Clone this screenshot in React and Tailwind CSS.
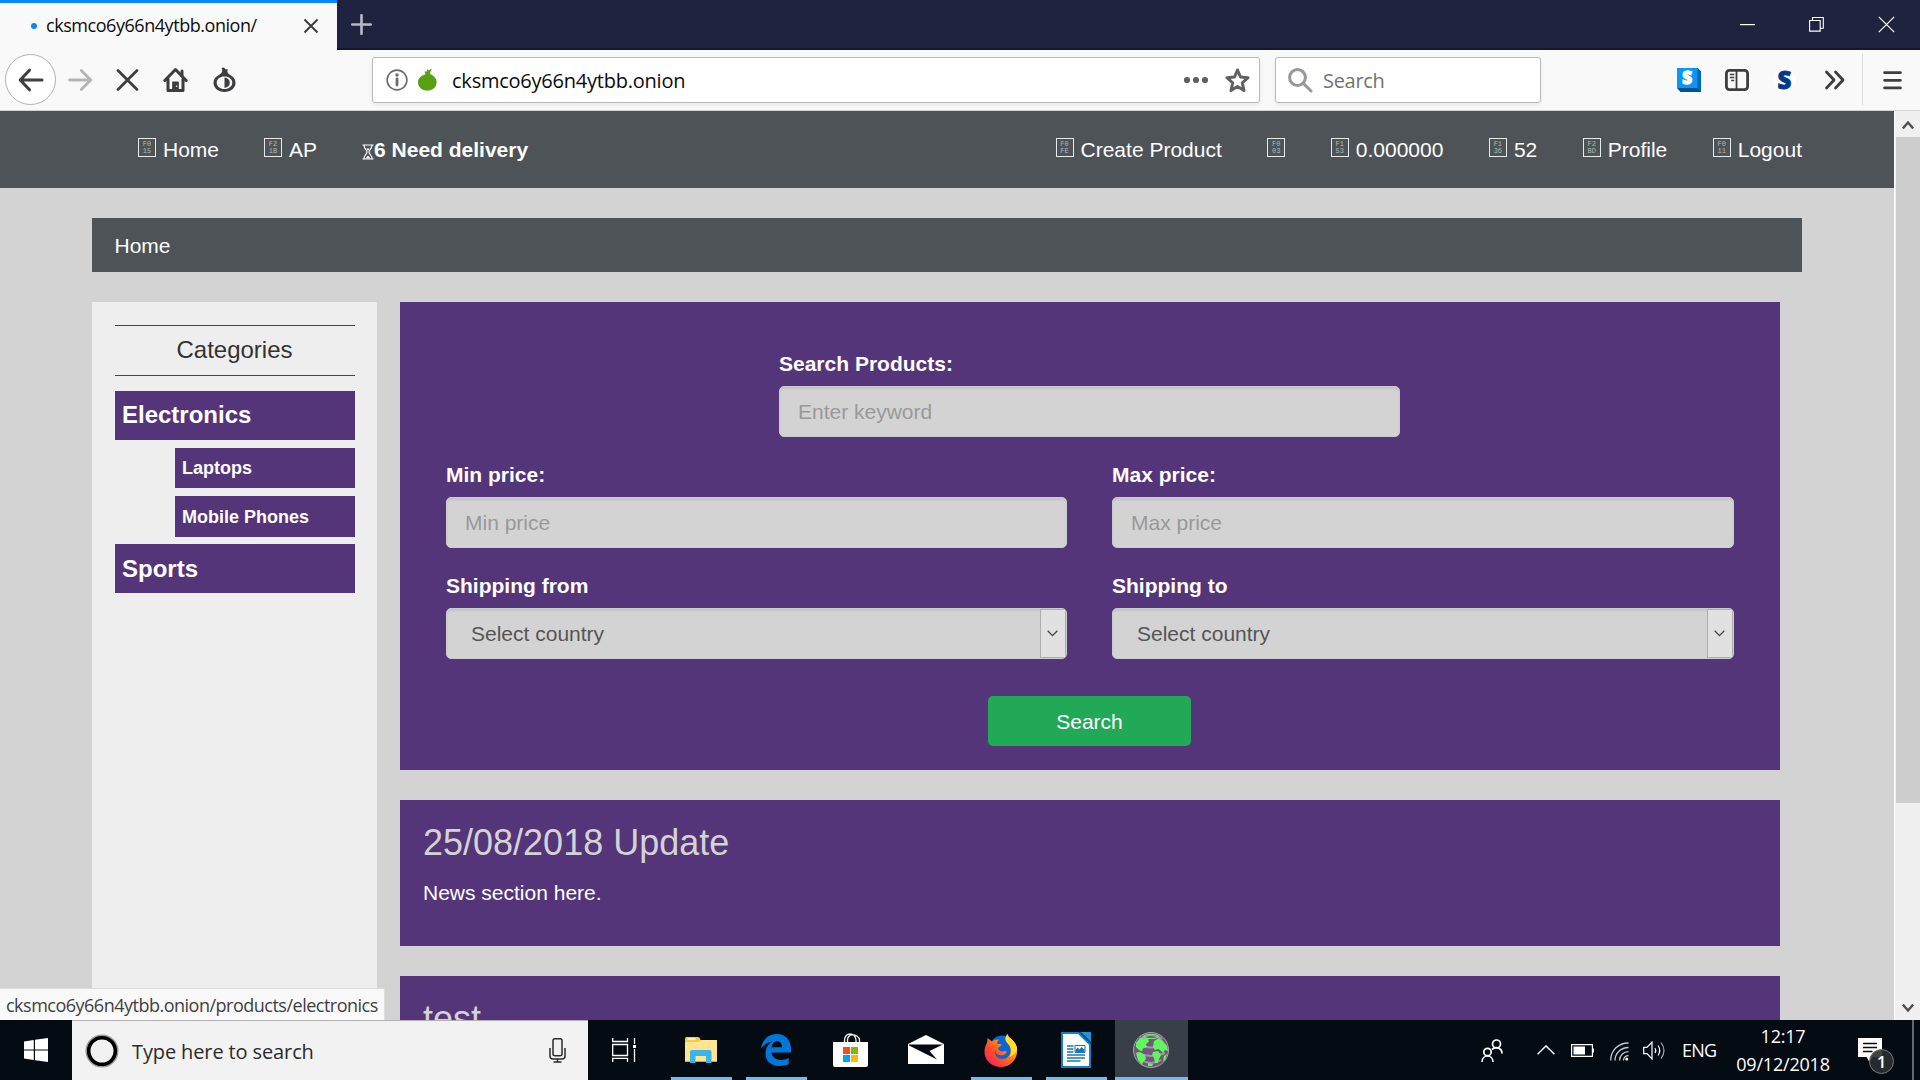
import React from "react";

// Box drawn by the browser when the icon font has no glyph
const MissingGlyph = ({ code }) => (
  <span className="mt-[3px] flex h-[19px] w-[18px] flex-none flex-col items-center justify-center border border-[#e8e9e9] font-['Liberation_Mono'] text-[7px] leading-[7px] text-[#b4b8ba]">
    <span>{code.slice(0, 2)}</span>
    <span>{code.slice(2)}</span>
  </span>
);

const NavItem = ({ code, label }) => (
  <a className="flex h-[30px] gap-[7px] whitespace-nowrap text-[21px] leading-[30px] text-white">
    <MissingGlyph code={code} />
    {label && <span>{label}</span>}
  </a>
);

const Field = ({ label, placeholder, className = "" }) => (
  <div className={className}>
    <label className="mb-[7px] block text-[21px] font-bold leading-[30px] text-white">
      {label}
    </label>
    <input
      type="text"
      placeholder={placeholder}
      className="block h-[51px] w-full rounded-[5px] border border-[#ccc] bg-[#d3d3d3] px-[18px] text-[21px] shadow-[inset_0_2px_2px_rgba(0,0,0,0.075)] placeholder:text-[#999]"
    />
  </div>
);

const SelectField = ({ label }) => (
  <div>
    <label className="mb-[7px] block text-[21px] font-bold leading-[30px] text-white">
      {label}
    </label>
    <div className="flex h-[51px] w-full items-center justify-between overflow-hidden rounded-[5px] border border-[#ccc] bg-[#d3d3d3] pl-[24px] text-[21px] text-[#555] shadow-[inset_0_2px_2px_rgba(0,0,0,0.075)]">
      <span>Select country</span>
      <span className="flex h-[49px] w-[26px] items-center justify-center border border-[#adadad] bg-[#e1e1e1] pr-px">
        <svg width="11" height="7" viewBox="0 0 11 7" fill="none" stroke="#444" strokeWidth="1.3">
          <path d="M.7 .8 5.5 5.6 10.3 .8" />
        </svg>
      </span>
    </div>
  </div>
);

const NewsCard = ({ title, children }) => (
  <div className="h-[146px] flex-none bg-[#553579] px-[23px] pt-[23px]">
    <h2 className="text-[36px] leading-[40px] text-[#d3d3d3]">{title}</h2>
    <p className="mt-[15px] text-[21px] leading-[30px] text-white">{children}</p>
  </div>
);

const TitleBar = () => (
  <div className="flex h-[50px] flex-none bg-[#202340]">
    <div className="flex w-[337px] items-center border-t-[3px] border-[#0a84ff] bg-[#f9f9fa] pb-px pl-[31px]">
      <span className="size-[6px] rounded-full bg-[#0a84ff]" />
      <span className="-mt-px ml-[9px] w-[257px] whitespace-nowrap text-[18px] tracking-[-0.45px] text-[#0c0c0d]">
        cksmco6y66n4ytbb.onion/
      </span>
      <svg width="16" height="16" viewBox="0 0 16 16" stroke="#3d3d3f" strokeWidth="2">
        <path d="M1.5 1.5 14.5 14.5M14.5 1.5 1.5 14.5" />
      </svg>
    </div>
    <div className="flex flex-1 items-center justify-between border-b-2 border-[#15172d] pl-[14px] pr-[25px]">
      <svg width="21" height="21" viewBox="0 0 21 21" stroke="#b9bac3" strokeWidth="2.6" strokeLinecap="round">
        <path d="M10.5 1.2V19.8M1.2 10.5H19.8" />
      </svg>
      <div className="flex items-center gap-[54px]">
        <svg width="15" height="16" viewBox="0 0 15 16" fill="#fff">
          <path d="M0 8h15v1.2H0z" />
        </svg>
        <svg width="15" height="16" viewBox="0 0 15 16" fill="none" stroke="#fff" strokeWidth="1.1">
          <path d="M.6 4.5h10.6v10.6H.6zM3.5 4.5V1.5h10.8v10.8h-3" />
        </svg>
        <svg width="17" height="17" viewBox="0 0 17 17" stroke="#fff" strokeWidth="1.2">
          <path d="M.8 .8 16.2 16.2M16.2 .8 .8 16.2" />
        </svg>
      </div>
    </div>
  </div>
);

const Toolbar = () => (
  <div className="flex h-[61px] flex-none items-start border-b border-[#d3d3d5] bg-[#f9f9fa]">
    <div className="ml-[5px] mt-[4px] flex size-[51px] flex-none items-center justify-center rounded-full border border-[#b1b1b3] bg-white">
      <svg width="26" height="24" viewBox="0 0 26 24" fill="none" stroke="#3e3e40" strokeWidth="3" strokeLinecap="round" strokeLinejoin="round">
        <path d="M24 12H2.5M11.5 2.2 2.200 12 11.5 21.8" />
      </svg>
    </div>
    <svg className="ml-[12px] mt-[18px] flex-none" width="25" height="24" viewBox="0 0 25 24" fill="none" stroke="#b5b5b6" strokeWidth="2.8" strokeLinecap="round" strokeLinejoin="round">
      <path d="M1.6 12H22.5M13.3 2.4 22.8 12 13.3 21.6" />
    </svg>
    <svg className="ml-[23px] mt-[18px] flex-none" width="23" height="24" viewBox="0 0 23 24" stroke="#3e3e40" strokeWidth="2.8" strokeLinecap="round">
      <path d="M2 2.5 21 21.5M21 2.5 2 21.5" />
    </svg>
    <svg className="ml-[24px] mt-[17px] flex-none" width="25" height="26" viewBox="0 0 25 26" fill="none" stroke="#3e3e40" strokeWidth="3" strokeLinejoin="round" strokeLinecap="round">
      <path d="M1.8 13.5 12.5 2.5 23.2 13.5M5 12V23.4H20V12" />
      <path d="M19 4v5" />
      <path d="M9.8 23.5V15h5.4v8.5z" strokeWidth="1.2" fill="#3e3e40" />
      <circle cx="13.6" cy="19.3" r=".8" fill="#fff" stroke="none" />
    </svg>
    <svg className="ml-[25px] mt-[17px] flex-none" width="23" height="26" viewBox="0 0 23 26" fill="#3e3e40" fillRule="evenodd">
      <path d="M8.500 1 11 .6 12.300 2.200 15 2.600C13.800 4.200 14.200 6 16.500 7.500 20.500 9.500 22.500 12.300 22.500 15.800 22.500 21.400 17.600 25 11.500 25S.5 21.400.5 15.800C.5 12.300 2.500 9.500 6.500 7.500 9.300 6 10 3.500 8.500 1zM11.500 9.400C7 9.400 3.700 12 3.700 15.700S7 22 11.500 22s7.800-2.600 7.800-6.300-3.300-6.300-7.800-6.300z" />
      <path d="M11.500 10.600C14.800 11 16.800 13 16.800 15.800S14.800 20.600 11.500 21z" />
    </svg>

    <div className="ml-[136px] mt-[7px] flex h-[46px] w-[888px] flex-none items-center rounded-[3px] border border-[#b9b9bb] bg-white pl-[13px] pr-[9px] shadow-[0_2px_5px_rgba(0,0,0,0.07)]">
      <svg width="22" height="22" viewBox="0 0 22 22" fill="none" stroke="#6a6a6c">
        <circle cx="11" cy="11" r="9.900" strokeWidth="1.6" />
        <path d="M11 9.800V16" strokeWidth="2.8" strokeLinecap="round" />
        <circle cx="11" cy="6" r="1.7" fill="#6a6a6c" stroke="none" />
      </svg>
      <svg className="ml-[10px]" width="19" height="24" viewBox="0 0 19 24" fill="#58a010">
        <path d="M7.600 6.200 6.200 3.200 8.200 4 9.300 1.200 10.600 2.500 14 .4C12.600 2.400 12 4.200 12.300 6.300 16.200 7.800 18.600 10.600 18.600 14.200 18.600 19.100 14.600 22.600 9.300 22.600S0 19.100 0 14.200C0 10.300 3.200 7.600 7.600 6.200z" />
      </svg>
      <span className="ml-[15px] mt-px flex-1 whitespace-nowrap text-[20px] tracking-[-0.23px] text-[#0c0c0d]">
        cksmco6y66n4ytbb.onion
      </span>
      <svg width="26" height="8" viewBox="0 0 26 8" fill="#606062">
        <circle cx="4" cy="4" r="3.100" />
        <circle cx="13" cy="4" r="3.100" />
        <circle cx="22" cy="4" r="3.100" />
      </svg>
      <svg className="ml-[16px]" width="25" height="25" viewBox="0 0 25 25" fill="none" stroke="#606062" strokeWidth="3" strokeLinejoin="round">
        <path d="M12.500 2 15.500 9 23 9.700 17.300 14.800 19 22.600 12.500 18.500 6 22.600 7.700 14.800 2 9.700 9.500 9z" />
      </svg>
    </div>

    <div className="ml-[15px] mt-[7px] flex h-[46px] w-[266px] flex-none items-center rounded-[3px] border border-[#b9b9bb] bg-white pl-[12px] shadow-[0_2px_5px_rgba(0,0,0,0.07)]">
      <svg width="25" height="25" viewBox="0 0 25 25" fill="none" stroke="#98989a" strokeWidth="3" strokeLinecap="round">
        <circle cx="9.500" cy="9.500" r="7.900" />
        <path d="M15.500 15.500 23 23" />
      </svg>
      <span className="ml-[10px] mt-px text-[20px] tracking-[-0.3px] text-[#737373]">Search</span>
    </div>

    <svg className="ml-[136px] mt-[18px] flex-none overflow-visible" width="24" height="24" viewBox="0 0 24 24">
      <path d="M0 0h20.500L24 3.500V24H3.500L0 20z" fill="#00528f" />
      <path d="M20.500 0 24 3.500V24L20.500 20z" fill="#0069b5" />
      <path d="M0 0h20.500v20H0z" fill="#0996f8" />
      <text x="10.200" y="15.800" textAnchor="middle" fontFamily="Open Sans" fontSize="17" fontWeight="800" fill="#fff" stroke="#fff" strokeWidth="1.300">S</text>
    </svg>
    <svg className="ml-[24px] mt-[19px] flex-none" width="24" height="22" viewBox="0 0 24 22" fill="none" stroke="#3e3e40">
      <rect x="1.400" y="1.400" width="21.200" height="19.200" rx="3" strokeWidth="2.800" />
      <path d="M11.500 2v18" strokeWidth="1.800" />
      <path d="M4.800 5.500h4.500M4.800 8.500h4.500M6.200 11.500h3" strokeWidth="1.500" />
    </svg>
    <svg className="ml-[23px] mt-[12px] flex-none overflow-visible" width="25" height="36" viewBox="0 -5 25 36">
      <circle cx="12.500" cy="13" r="11" fill="#fff" />
      <text x="12.500" y="21.600" textAnchor="middle" fontFamily="Open Sans" fontSize="24" fontWeight="800" fill="#003a8c" stroke="#003a8c" strokeWidth=".9">S</text>
    </svg>
    <svg className="ml-[27px] mt-[20px] flex-none" width="22" height="20" viewBox="0 0 22 20" fill="none" stroke="#3e3e40" strokeWidth="2.800" strokeLinecap="round" strokeLinejoin="round">
      <path d="M2.500 2 10 10 2.500 18M11.500 2 19 10 11.500 18" />
    </svg>
    <span className="ml-[16px] mt-[4px] h-[51px] w-px flex-none bg-[#dcdcdd]" />
    <svg className="ml-[20px] mt-[21px] flex-none" width="19" height="19" viewBox="0 0 19 19" stroke="#3e3e40" strokeWidth="2.800" strokeLinecap="round">
      <path d="M1.600 1.700H17.400M1.600 9.300H17.400M1.600 16.900H17.400" />
    </svg>
  </div>
);

const SiteNav = () => (
  <nav className="flex h-[77px] flex-none justify-between bg-[#4e5357] pl-[138px] pr-[92px] pt-[24px]">
    <div className="flex gap-[45px]">
      <NavItem code="F015" label="Home" />
      <NavItem code="F21B" label="AP" />
      <a className="flex h-[30px] items-start whitespace-nowrap text-[21px] font-bold leading-[30px] text-white">
        <svg className="mt-[9px]" width="12" height="16" viewBox="0 0 12 16" fill="none" stroke="#fff" strokeWidth="1.200">
          <path d="M.5 1h11M.5 15h11M2 1c0 4 3 5 3 7s-3 3-3 7M10 1c0 4-3 5-3 7s3 3 3 7" />
          <path d="M3.500 14.500 6 11.500 8.500 14.500zM4.500 4.500h3L6 7z" fill="#fff" stroke="none" />
        </svg>
        6 Need delivery
      </a>
    </div>
    <div className="flex gap-[45.5px]">
      <NavItem code="F0FE" label="Create Product" />
      <NavItem code="F003" />
      <NavItem code="F153" label="0.000000" />
      <NavItem code="F136" label="52" />
      <NavItem code="F2BD" label="Profile" />
      <NavItem code="F011" label="Logout" />
    </div>
  </nav>
);

const Sidebar = () => (
  <aside className="h-[718px] w-[285px] flex-none bg-[#eee] pl-[23px] pr-[22px] pt-[23px]">
    <div className="flex h-[51px] items-center justify-center border-y border-[#553579] pb-[2px] pr-px text-[24px] text-[#333]">
      Categories
    </div>
    <div className="mt-[15px] flex h-[49px] items-center bg-[#553579] pb-px pl-[7px] text-[24px] font-bold text-white">
      Electronics
    </div>
    <div className="ml-[60px] mt-[8px] flex h-[40px] items-center bg-[#553579] pl-[7px] text-[18px] font-bold text-white">
      Laptops
    </div>
    <div className="ml-[60px] mt-[8px] flex h-[41px] items-center bg-[#553579] pl-[7px] pt-px text-[18px] font-bold text-white">
      Mobile Phones
    </div>
    <div className="mt-[7px] flex h-[49px] items-center bg-[#553579] pl-[7px] text-[24px] font-bold text-white">
      Sports
    </div>
  </aside>
);

const SearchPanel = () => (
  <div className="flex h-[468px] flex-none flex-col items-center bg-[#553579] px-[46px] pt-[47px]">
    <Field label="Search Products:" placeholder="Enter keyword" className="mr-px w-[621px]" />
    <div className="mt-[23px] grid w-full grid-cols-[621px_622px] gap-x-[45px] gap-y-[23px]">
      <Field label="Min price:" placeholder="Min price" />
      <Field label="Max price:" placeholder="Max price" />
      <SelectField label="Shipping from" />
      <SelectField label="Shipping to" />
    </div>
    <button className="mr-px mt-[37px] h-[50px] w-[203px] rounded-[5px] bg-[#22a957] pt-px text-[21px] text-white">
      Search
    </button>
  </div>
);

const ScrollBar = () => (
  <div className="flex w-[26px] flex-none flex-col items-center justify-between border-l border-white bg-[#f0f0f0]">
    <div className="flex h-[26px] items-center pt-[2px]">
      <svg width="12" height="10" viewBox="0 0 12 10" fill="none" stroke="#505050" strokeWidth="2.400">
        <path d="M.8 8.500 6 2.500 11.200 8.500" />
      </svg>
    </div>
    <div className="h-[666px] w-[24px] bg-[#cdcdcd]" />
    <div className="mt-auto flex h-[24px] items-center">
      <svg width="12" height="10" viewBox="0 0 12 10" fill="none" stroke="#505050" strokeWidth="2.400">
        <path d="M.8 1.500 6 7.500 11.200 1.500" />
      </svg>
    </div>
  </div>
);

const FolderIcon = () => (
  <svg width="32" height="26" viewBox="0 0 32 26">
    <path d="M0 1.500Q0 0 1.500 0H13q1.500 0 2 1.500L15.500 3H32V24.500H0z" fill="#fbc93b" />
    <path d="M0 5h14l2-2h16v21.500H0z" fill="#ffe592" />
    <path d="M2.500 2h8" stroke="#fff" strokeWidth="1.400" />
    <path d="M5 26V15q0-2 2-2h17.500q2 0 2 2V26H21v-7H10.500v7z" fill="#3bb4e7" />
  </svg>
);

const EdgeIcon = () => (
  <svg width="30" height="32" viewBox="0 0 30 32" fill="#0078d7">
    <path d="M0 14.500C1.200 6 7.300 0 15.600 0 24.500 0 30 6.300 30 15v3.600H10.500c.3 5.200 4.700 7.300 9.600 7.300 3 0 5.400-.7 7.600-2v6.200C25 31.500 22 32 18.500 32 10.200 32 4.500 27.300 4.500 19.500c0-5.600 2.700-9.700 7-12C6.800 8.200 2.600 11 0 14.500zM10.600 13.200H21c0-3.700-1.700-6-5-6-3 0-4.900 2.500-5.400 6z" />
  </svg>
);

const StoreIcon = () => (
  <svg width="35" height="34" viewBox="0 0 35 34">
    <path d="M11.500 9.500V7c0-3.500 2.300-6 5.500-6s6 2.500 6 6v2.500M14.500 9.500V7c0-3 2-5.300 5-5.300S26.500 4 26.500 7v2.500" fill="none" stroke="#e8e8e8" strokeWidth="1.400" />
    <path d="M0 9h35v23q0 2-2 2H2q-2 0-2-2z" fill="#fff" />
    <path d="M10 14h7v7h-7z" fill="#f25022" />
    <path d="M18 14h7v7h-7z" fill="#7fba00" />
    <path d="M10 22h7v7h-7z" fill="#00a4ef" />
    <path d="M18 22h7v7h-7z" fill="#ffb900" />
  </svg>
);

const MailIcon = () => (
  <svg width="36" height="29" viewBox="0 0 36 29">
    <path d="M0 9 18 0 36 9v20H0z" fill="#fff" />
    <path d="M1 9.500H35L21.500 16 29 24.500 1 10.500z" fill="#050b13" />
  </svg>
);

const FirefoxIcon = () => (
  <svg width="34" height="34" viewBox="0 0 34 34">
    <defs>
      <linearGradient id="fxBody" x1="0" y1="1" x2="1" y2="0">
        <stop offset="0" stopColor="#f5156c" />
        <stop offset=".35" stopColor="#ff4a2f" />
        <stop offset=".65" stopColor="#ff9416" />
        <stop offset="1" stopColor="#ffe226" />
      </linearGradient>
    </defs>
    <circle cx="18" cy="14.500" r="12" fill="#0a66d8" />
    <path d="M3.500 5 8 8.500C10 6.800 13 6 15 7c-1.500 1-2.500 2.600-1.800 3.700l4.300.6c.4 1.300-1.500 2.500-3.500 3.400 0 3 3 4.500 5.500 3.500 2-.8 3.700 0 3 1.300C20 24 12 23 11 17.500c-.8 5 3 9 8 8.500 7-.7 9-7.500 6.500-13C24 10 20.500 8 21.500 4.500L23.500 1l1 3C30 7 34 13 33 20c-1 8-8 14-16 14C8 34 0 27.500.5 18 .7 14 2 11.500 3.300 9z" fill="url(#fxBody)" />
    <path d="M23.500 1c-3 4-2 7 .5 9.500 4 4 4 9 1.500 13.500C30 22 33 19 33 15 32.500 10 28 7 25 4z" fill="#ffe12b" />
  </svg>
);

const WriterIcon = () => (
  <svg width="30" height="36" viewBox="0 0 30 36">
    <path d="M1 1H17.500L29 12.500V35H1z" fill="#fff" stroke="#1382c2" strokeWidth="2" />
    <path d="M18 0H30V12z" fill="#0d5f94" />
    <path d="M20.500 0H30V9.500z" fill="#2795d4" />
    <path d="M6 14h6.500M6 17h6.500M6 20h6.500M6 23h18M6 26h18M6 29h13.500" stroke="#1b75b5" strokeWidth="1.500" />
    <path d="M14 13.500h10v7H14z" fill="#fff" stroke="#1b75b5" />
    <path d="M14.500 20v-2l2-2.500 2 2 2-2.500 3 2.500V20z" fill="#1b75b5" />
  </svg>
);

const TorIcon = () => (
  <svg width="36" height="36" viewBox="0 0 36 36">
    <circle cx="18" cy="18" r="17.500" fill="#73557e" stroke="#ad9fb4" />
    <path d="M7 7q11-8 22 0M5 13q13 5 26 0M4 21q14 6 28 0M8 28q10 6 20 0" fill="none" stroke="#a690b2" strokeWidth="2" />
    <ellipse cx="18" cy="4.500" rx="7" ry="2" fill="none" stroke="#61f75c" strokeWidth="1.200" />
    <path d="M3 11 7 6l8 .5 1 3-3 2.500 1 3-4 1.500-1 3-3-1.500-3-3zM3 21l4-1 5 3 1 4-3 3-1 3-4-5zM21 9l5-3 4 3 4 5 1 5-3-1-2 3-3-3-2-1-3 1-2-3zM20 20l5-1 3 4-2 4-1 4h-3l-1-5-2-3zM31 24l3-2-2 6-2 1zM15 31l5 1-1 2h-4z" fill="#61f75c" />
  </svg>
);

const TaskItem = ({ children, open = false, active = false }) => (
  <div className={`flex h-full w-[73px] flex-none flex-col items-center ${active ? "bg-[#393f48]" : ""}`}>
    <div className="flex flex-1 items-center justify-center pr-[2px] pt-[2px]">{children}</div>
    <div className={`h-[3px] ${active ? "w-full" : "w-[61px]"} ${open ? "bg-[#76b9ed]" : ""}`} />
  </div>
);

const Taskbar = () => (
  <div className="flex h-[60px] flex-none bg-[#050b13] font-['Open_Sans',sans-serif] text-white">
    <div className="flex w-[72px] flex-none items-center justify-center">
      <svg width="24" height="24" viewBox="0 0 24 24" fill="#fff">
        <path d="M0 3.400 9.800 2V11.400H0zM11 1.800 24 0V11.400H11zM0 12.600H9.800V22L0 20.600zM11 12.600H24V24L11 22.200z" />
      </svg>
    </div>
    <div className="flex w-[516px] flex-none items-center border-t border-[#b0b0b0] bg-[#f2f2f2] pl-[13px] pr-[22px]">
      <svg width="34" height="34" viewBox="0 0 34 34" fill="none">
        <circle cx="17" cy="17" r="15.300" stroke="#9a9a9a" strokeWidth="2.500" />
        <circle cx="17" cy="17" r="13.300" stroke="#000" strokeWidth="3.600" />
      </svg>
      <span className="ml-[13px] mt-[2px] flex-1 whitespace-nowrap text-[20px] tracking-[-0.12px] text-[#2b2b2b]">
        Type here to search
      </span>
      <svg width="17" height="25" viewBox="0 0 17 25" fill="none" stroke="#2b2b2b" strokeWidth="1.500">
        <rect x="4" y=".8" width="9" height="17" rx="2" />
        <path d="M1 10v8q0 3 3 3h9q3 0 3-3v-8M8.500 21v3M4.500 24h8" />
      </svg>
    </div>
    <div className="flex w-[77px] flex-none items-center pl-[24px]">
      <svg width="25" height="24" viewBox="0 0 25 24" fill="none" stroke="#fff" strokeWidth="1.300">
        <path d="M.7 0V3.500H15.500V0M.7 6.500H15.500V17.500H.7zM.7 24V20.300H15.500V24M22.500 0V6M22.500 11V24" />
        <path d="M21 7h3v3h-3z" fill="#fff" stroke="none" />
      </svg>
    </div>
    <div className="flex gap-[2px]">
      <TaskItem open><FolderIcon /></TaskItem>
      <TaskItem open><EdgeIcon /></TaskItem>
      <TaskItem><StoreIcon /></TaskItem>
      <TaskItem><MailIcon /></TaskItem>
      <TaskItem open><FirefoxIcon /></TaskItem>
      <TaskItem open><WriterIcon /></TaskItem>
      <TaskItem open active><TorIcon /></TaskItem>
    </div>
    <div className="ml-auto flex items-center">
      <svg width="22" height="23" viewBox="0 0 22 23" fill="none" stroke="#fff" strokeWidth="1.700">
        <circle cx="15.500" cy="5" r="4" />
        <circle cx="6.500" cy="13" r="3.700" />
        <path d="M1 23c0-8 11-8 11 0M11 10.500c4-3.500 10-1.500 10 4" />
      </svg>
      <svg className="ml-[34px]" width="18" height="10" viewBox="0 0 18 10" fill="none" stroke="#fff" strokeWidth="1.400">
        <path d="M.6 9.300 9 .9 17.400 9.300" />
      </svg>
      <svg className="ml-[16px]" width="23" height="13" viewBox="0 0 23 13" fill="none" stroke="#fff" strokeWidth="1.200">
        <path d="M.6 .6h20.800v11.800H.6zM22.400 4.500v4" />
        <path d="M2.500 2.500h11.500v8H2.500z" fill="#fff" stroke="none" />
      </svg>
      <svg className="ml-[16px] mt-[2px]" width="19" height="19" viewBox="0 0 19 19" fill="none" stroke="#c8cacc" strokeWidth="1.300">
        <path d="M.7 18.500C.7 8.500 8 1 18.500 1M5 18.500C5 11 11 5.500 18.500 5.500M9.500 18.500c0-5 4-8.800 9-8.800M13.500 18.500c0-3 2-4.800 5-4.800" />
        <circle cx="16.800" cy="17" r="1.500" fill="#fff" stroke="none" />
      </svg>
      <svg className="ml-[14px]" width="23" height="19" viewBox="0 0 23 19" fill="none" stroke="#fff" strokeWidth="1.200">
        <path d="M.7 6.300H4L9 1V18L4 12.700H.7z" />
        <path d="M12 7q1.500 2.500 0 5M15 4.500q3.500 5 0 10" />
        <path d="M18 1.500q6 8 0 16" stroke="#a5a8ac" />
      </svg>
      <span className="ml-[16px] w-[36px] whitespace-nowrap text-[18px] tracking-[-0.8px]">ENG</span>
      <div className="ml-[14px] w-[102px] whitespace-nowrap text-center text-[18px] leading-[28px] tracking-[-0.2px]">
        <div>12:17</div>
        <div>09/12/2018</div>
      </div>
      <div className="relative ml-[24px] h-[24px] w-[54px]">
        <svg width="24" height="25" viewBox="0 0 24 25" fill="#fff">
          <path d="M0 0h24v19H15l-3.500 5L8.500 19H0z" />
          <path d="M5 5.500h14M5 9.500h14M5 13.500h9.500" stroke="#050b13" strokeWidth="1.300" />
        </svg>
        <span className="absolute left-[11px] top-[11px] flex size-[25px] items-center justify-center rounded-full border border-[#777] bg-[#2b2d30]/90 text-[17px] font-semibold">
          1
        </span>
      </div>
      <div className="h-[60px] w-[8px] border-l-2 border-[#63676c]" />
    </div>
  </div>
);

const App = () => {
  return (
    <div className="flex h-[1080px] w-[1920px] flex-col overflow-hidden font-['Open_Sans',sans-serif]">
      <TitleBar />
      <Toolbar />
      <div className="relative flex min-h-0 flex-1">
        <div className="flex w-[1894px] flex-none flex-col overflow-hidden bg-[#d3d3d3] font-['Liberation_Sans',Arial,sans-serif]">
          <SiteNav />
          <div className="ml-[92px] mt-[30px] h-[54px] w-[1710px] flex-none bg-[#4e5357] px-[22.5px] pt-[13px] text-[21px] leading-[30px] text-white">
            Home
          </div>
          <div className="ml-[92px] mt-[30px] flex gap-[23px]">
            <Sidebar />
            <main className="flex w-[1380px] flex-none flex-col gap-[30px]">
              <SearchPanel />
              <NewsCard title="25/08/2018 Update">News section here.</NewsCard>
              <NewsCard title="test" />
            </main>
          </div>
        </div>
        <ScrollBar />
        {/* link target shown on hover */}
        <div className="absolute bottom-0 left-0 flex h-[32px] w-[385px] items-center whitespace-nowrap border-r border-t border-[#dcdcdc] bg-[#f9f9fa] pl-[6px] pt-px text-[18px] tracking-[-0.5px] text-[#3f3f40]">
          cksmco6y66n4ytbb.onion/products/electronics
        </div>
      </div>
      <Taskbar />
    </div>
  );
};

export default App;
